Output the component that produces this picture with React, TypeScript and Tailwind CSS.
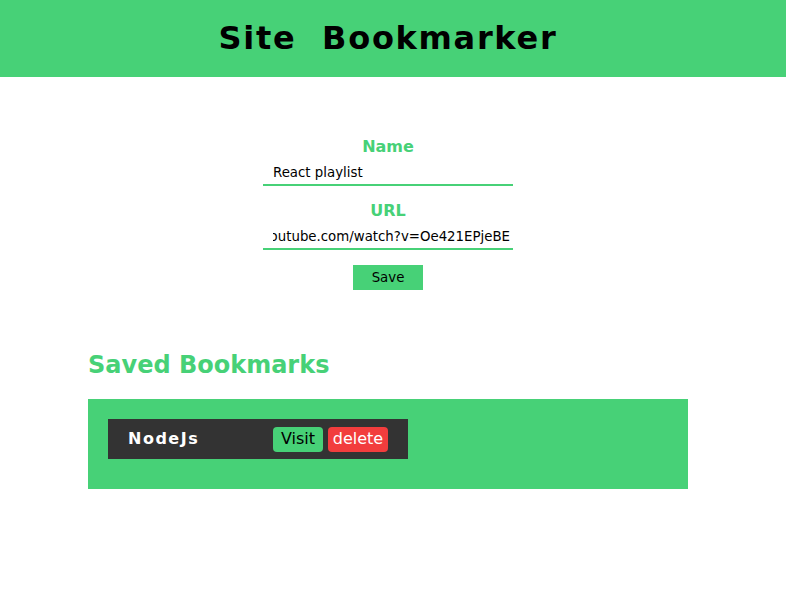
import { useState } from 'react'

const URL_VALUE = 'https://www.youtube.com/watch?v=Oe421EPjeBE'

export default function App() {
  const [name] = useState('React playlist')
  const [bookmarks] = useState([{ name: 'NodeJs', url: 'https://nodejs.org' }])

  return (
    <div className="min-h-[596px] bg-white font-['DejaVu_Sans',sans-serif]">
      <header className="h-[77px] bg-[#47d177] flex items-center justify-center pr-[10px]">
        <h1 className="text-[32px] font-bold tracking-[1.7px] text-black whitespace-pre -mt-[1px]">Site  Bookmarker</h1>
      </header>

      <div className="pr-[10px]">
        <form className="flex flex-col items-center pt-[58px]" onSubmit={(e) => e.preventDefault()}>
          <label className="text-base leading-6 font-bold text-[#47d177]">Name</label>
          <div className="mt-[1px] w-[250px] h-[26px] border-b-2 border-[#47d177] flex items-center pt-[2px] pl-[10px] text-[13.333px] text-black">
            {name}
          </div>
          <label className="mt-[13px] text-base leading-6 font-bold text-[#47d177]">URL</label>
          <div className="mt-[1px] w-[250px] h-[26px] border-b-2 border-[#47d177] flex items-center pt-[2px] pl-[10px] pr-[3px] text-[13.333px] text-black">
            <div className="flex-1 flex justify-end overflow-hidden whitespace-nowrap">
              <span className="shrink-0">{URL_VALUE}</span>
            </div>
          </div>
          <button type="submit" className="mt-[15px] w-[70px] h-[25px] bg-[#47d177] text-[13.333px] text-black">
            Save
          </button>
        </form>

        <div className="w-[600px] mx-auto mt-[59px]">
          <h2 className="text-2xl leading-8 font-bold text-[#47d177] mt-[1px]">Saved Bookmarks</h2>
          <div className="mt-[18px] h-[90px] bg-[#47d177] p-5">
            {bookmarks.map((b) => (
              <div key={b.name} className="w-[300px] h-10 bg-[#333333] flex items-center px-5">
                <span className="w-[145px] text-base font-bold tracking-[1.5px] text-white">{b.name}</span>
                <a href={b.url} className="w-[50px] h-[25px] rounded bg-[#47d177] text-black text-base flex items-center justify-center">
                  Visit
                </a>
                <button className="ml-[5px] w-[60px] h-[25px] rounded bg-[#f23d3d] text-white text-base flex items-center justify-center">
                  delete
                </button>
              </div>
            ))}
          </div>
        </div>
      </div>
    </div>
  )
}
